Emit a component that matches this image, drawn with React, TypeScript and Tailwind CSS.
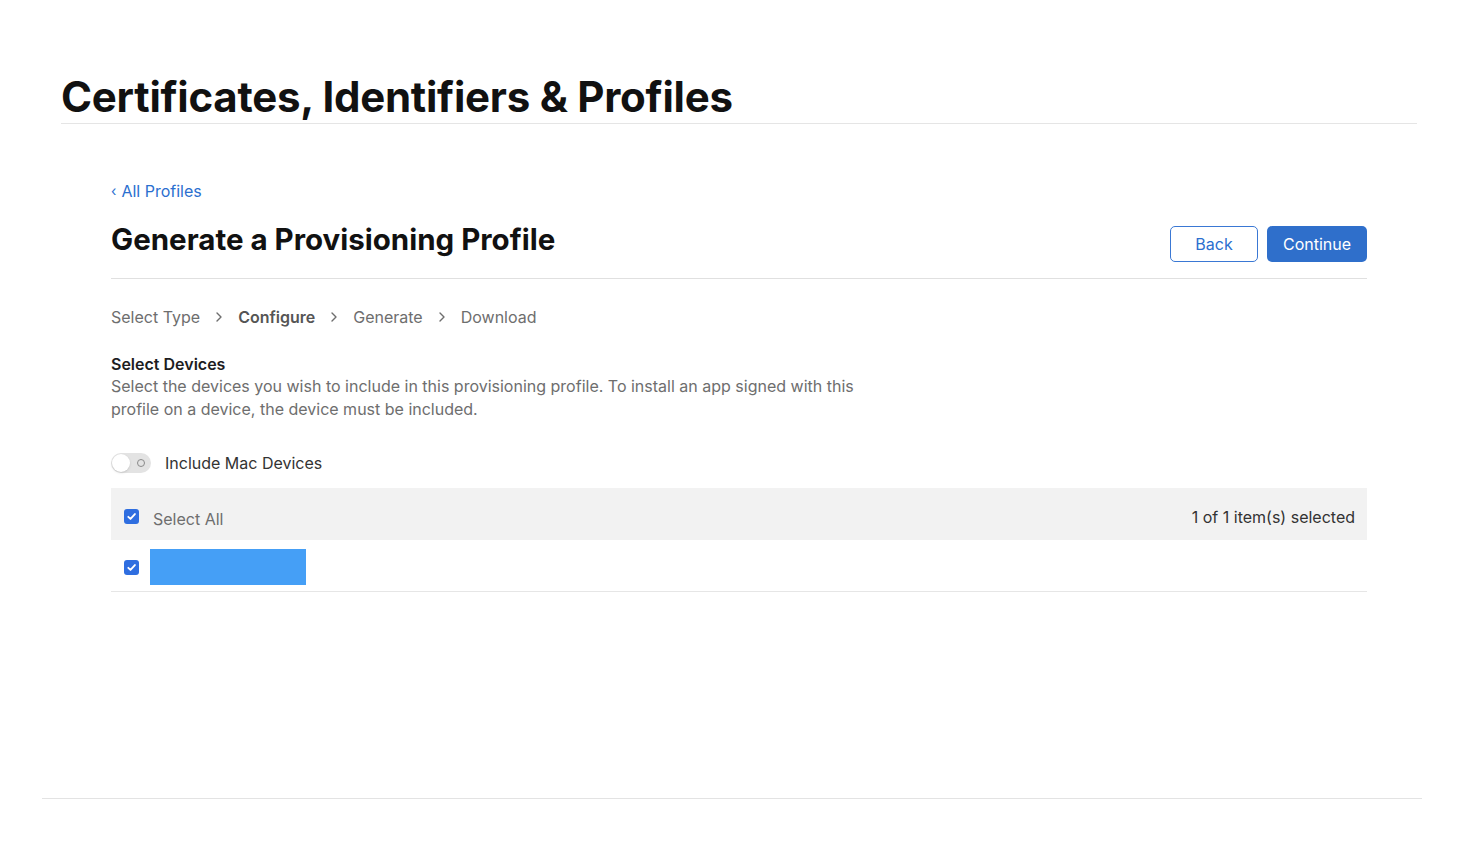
import React, { useState } from "react";

const STEPS = [
  { label: "Select Type", active: false },
  { label: "Configure", active: true },
  { label: "Generate", active: false },
  { label: "Download", active: false },
];

function Check({ checked }: { checked: boolean }) {
  return (
    <span
      className={`flex items-center justify-center w-[15px] h-[15px] rounded-[3px] ${
        checked ? "bg-[#2f6ee0]" : "border border-gray-400 bg-white"
      }`}
    >
      {checked && (
        <svg width="11" height="11" viewBox="0 0 12 12" fill="none">
          <path d="M2.5 6.3l2.4 2.4 4.8-5.4" stroke="white" strokeWidth="2" strokeLinecap="round" strokeLinejoin="round" />
        </svg>
      )}
    </span>
  );
}

export default function App() {
  const [mac, setMac] = useState(false);

  return (
    <div
      className="min-h-screen bg-white text-[#1d1d1f]"
      style={{ fontFamily: "Inter, 'Noto Sans', sans-serif" }}
    >
      <div className="h-[844px] flex flex-col">
        <header className="ml-[61px] mr-[67px] pt-[72px] border-b border-[#e5e5e5] pb-[1px]">
          <h1 className="text-[42px] leading-[50px] font-bold tracking-[-0.25px] text-[#111]">
            Certificates, Identifiers &amp; Profiles
          </h1>
        </header>

        <main className="mx-[111px] w-[1256px] pt-[56px] flex-1">
          <a href="#" className="flex items-center gap-[5px] text-[16px] leading-[22px] text-[#2b6fcf]">
            <span className="text-[14px]">‹</span>
            <span>All Profiles</span>
          </a>

          <div className="flex items-end justify-between border-b border-[#e0e0e0] pb-[16px] mt-[19px]">
            <h2 className="text-[29.5px] leading-[36px] font-bold text-[#111] mb-[5px]">
              Generate a Provisioning Profile
            </h2>
            <div className="flex gap-[9px]">
              <button className="h-[36px] w-[88px] rounded-[5px] border border-[#3a78d4] text-[#2b6fcf] text-[16px]">
                Back
              </button>
              <button className="h-[36px] w-[100px] rounded-[5px] bg-[#2f6fcb] text-white text-[16px]">
                Continue
              </button>
            </div>
          </div>

          <nav className="flex items-center mt-[27px] text-[16px] leading-[22px] text-[#6e6e6e]">
            {STEPS.map((s, i) => (
              <React.Fragment key={s.label}>
                {i > 0 && (
                  <svg className="mx-[15px]" width="8" height="12" viewBox="0 0 8 12" fill="none">
                    <path d="M2 2l4 4-4 4" stroke="#6e6e6e" strokeWidth="1.4" strokeLinecap="round" strokeLinejoin="round" />
                  </svg>
                )}
                <span className={s.active ? "font-semibold text-[#555]" : ""}>{s.label}</span>
              </React.Fragment>
            ))}
          </nav>

          <section className="mt-[25px]">
            <h3 className="text-[16px] leading-[22px] font-semibold text-[#1d1d1f]">Select Devices</h3>
            <p className="text-[16px] leading-[23px] text-[#6e6e6e] w-[760px]">
              Select the devices you wish to include in this provisioning profile. To install an app signed with this
              profile on a device, the device must be included.
            </p>
          </section>

          <div className="flex items-center gap-[14px] mt-[30px]">
            <button
              onClick={() => setMac(!mac)}
              className={`relative w-[40px] h-[20px] rounded-full ${mac ? "bg-[#2f6fcb]" : "bg-[#e3e3e3]"}`}
            >
              <span
                className={`absolute top-[1px] w-[18px] h-[18px] rounded-full bg-white shadow ${
                  mac ? "left-[21px]" : "left-[1px]"
                }`}
              />
              {!mac && (
                <span className="absolute right-[6px] top-[6px] w-[8px] h-[8px] rounded-full border-[1.5px] border-[#8a8a8a]" />
              )}
            </button>
            <span className="text-[16px] text-[#333]">Include Mac Devices</span>
          </div>

          <div className="mt-[13px] border-b border-[#e6e6e6]">
            <div className="h-[52px] bg-[#f2f2f2] flex items-center justify-between pl-[13px] pr-[12px] pt-[5px]">
              <div className="flex items-center gap-[14px]">
                <Check checked />
                <span className="text-[16px] text-[#6e6e6e] mt-[4px]">Select All</span>
              </div>
              <span className="text-[16px] text-[#333]">1 of 1 item(s) selected</span>
            </div>
            <div className="flex items-center gap-[11px] pl-[13px] pt-[9px] pb-[6px]">
              <Check checked />
              <div className="w-[156px] h-[36px] bg-[#459ff6]" />
            </div>
          </div>
        </main>

        <footer className="ml-[42px] mr-[62px] border-t border-[#e3e3e3] mb-[45px]" />
      </div>
    </div>
  );
}
